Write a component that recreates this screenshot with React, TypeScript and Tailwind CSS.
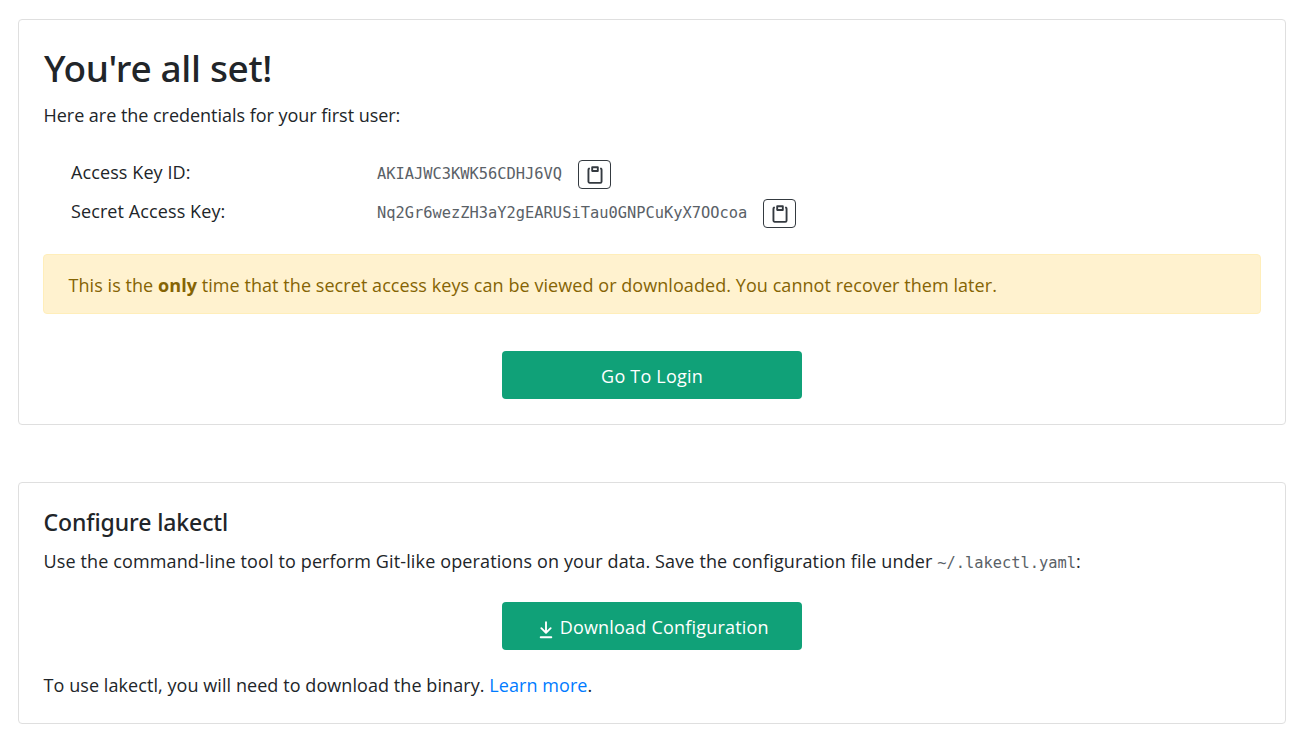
import React from "react";

const green =
  "flex h-12 w-[300px] items-center justify-center rounded-[4px] bg-[#10a178] text-white whitespace-nowrap tracking-[0.2px]";

function CopyButton() {
  return (
    <button className="flex h-[29px] w-[33px] items-center justify-center rounded-[4px] border border-[#343a40] text-[#343a40]">
      <svg width="20" height="20" viewBox="0 0 16 16" fill="currentColor" fillRule="evenodd">
        <path d="M5.75 1a.75.75 0 00-.75.75v3c0 .414.336.75.75.75h4.5a.75.75 0 00.75-.75v-3a.75.75 0 00-.75-.75h-4.5zm.75 3V2.5h3V4h-3zm-2.874-.467a.75.75 0 00-.752-1.298A1.75 1.75 0 002 3.75v9.5c0 .966.784 1.75 1.75 1.75h8.5A1.75 1.75 0 0014 13.25v-9.5a1.75 1.75 0 00-.874-1.515.75.75 0 10-.752 1.298.25.25 0 01.126.217v9.5a.25.25 0 01-.25.25h-8.5a.25.25 0 01-.25-.25v-9.5a.25.25 0 01.126-.217z" />
      </svg>
    </button>
  );
}

function Credential({ label, value }: { label: string; value: string }) {
  return (
    <div className="flex h-[39px] items-center">
      <span className="-mt-[5px] w-[306px] leading-[28px] tracking-[0.1px]">{label}</span>
      <code className="mr-[15.9px] font-['DejaVu_Sans_Mono',monospace] text-[15.38px] text-[#5a6167]">{value}</code>
      <CopyButton />
    </div>
  );
}

export default function App() {
  return (
    <main className="flex h-[739px] flex-col gap-[57px] bg-white pl-[18px] pr-[13px] pt-[19px] font-['Open_Sans',sans-serif] text-[18px] font-normal text-[#212529]">
      <section className="flex h-[406px] flex-col rounded-[4px] border border-[#dfdfdf] px-6 pt-6">
        <h1 className="h-[48px] pl-px font-['Noto_Sans',sans-serif] text-[37px] font-medium leading-[48px] tracking-[-0.35px]">You're all set!</h1>
        <p className="mt-[9px] pl-[0.5px] leading-[28px] tracking-[-0.03px]">Here are the credentials for your first user:</p>
        <div className="mt-[26px] pl-7">
          <Credential label="Access Key ID:" value="AKIAJWC3KWK56CDHJ6VQ" />
          <Credential label="Secret Access Key:" value="Nq2Gr6wezZH3aY2gEARUSiTau0GNPCuKyX7OOcoa" />
        </div>
        <div className="mt-[21px] flex h-[60px] items-center rounded-[4px] border border-[#ffeeba] bg-[#fff2cf] pl-[24.5px] pt-[2px] text-[#856404]">
          <p className="tracking-[0.062px]">
            This is the <b className="font-bold">only</b> time that the secret access keys can be viewed or downloaded. You cannot recover them later.
          </p>
        </div>
        <button className={green + " mt-[37px] self-center pt-[2px]"}>Go To Login</button>
      </section>
      <section className="flex h-[242px] flex-col rounded-[4px] border border-[#dfdfdf] px-6 pt-6">
        <h2 className="h-[32px] pl-[0.5px] font-['Noto_Sans',sans-serif] text-[23px] font-medium leading-[31px] tracking-[-0.1px]">Configure lakectl</h2>
        <p className="mt-[8px] h-[28px] pl-[0.5px] leading-[28px] tracking-[0.13px]">
          Use the command-line tool to perform Git-like operations on your data. Save the configuration file under{" "}
          <code className="font-['DejaVu_Sans_Mono',monospace] text-[15.37px] tracking-normal text-[#5a6167]">~/.lakectl.yaml</code>:
        </p>
        <button className={green + " mt-[27px] self-center"}>
          <svg className="ml-[0.5px] mr-[4px] mt-[7px]" width="20" height="20" viewBox="0 0 16 16" fill="currentColor">
            <path d="M7.47 10.78a.75.75 0 001.06 0l3.75-3.75a.75.75 0 00-1.06-1.06L8.75 8.44V1.75a.75.75 0 00-1.5 0v6.69L4.78 5.97a.75.75 0 00-1.06 1.06l3.75 3.75zM3.75 13a.75.75 0 000 1.5h8.5a.75.75 0 000-1.5h-8.5z" />
          </svg>
          <span className="mt-[2px]">Download Configuration</span>
        </button>
        <p className="mt-[21px] pl-[0.5px] leading-[28px] tracking-[0.07px]">
          To use lakectl, you will need to download the binary. <a className="text-[#007bff]">Learn more</a>.
        </p>
      </section>
    </main>
  );
}
